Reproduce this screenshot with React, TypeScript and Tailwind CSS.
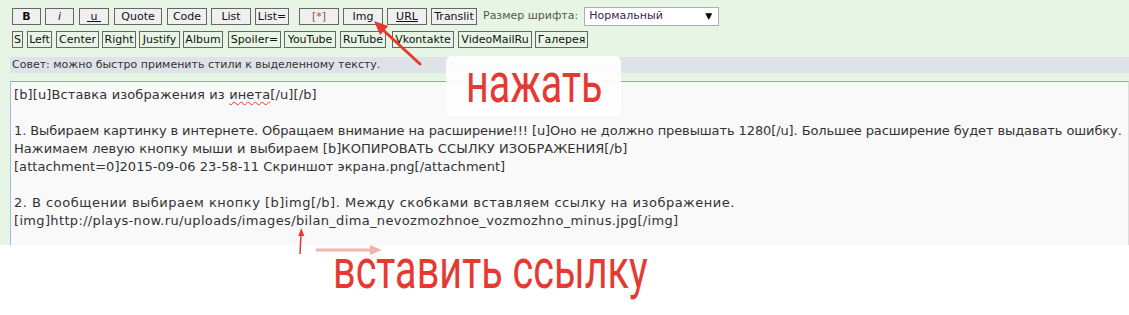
import React from "react";

const row1 = [
  { label: "B", cls: "ml-[2px] w-[29px] font-bold" },
  { label: "i", cls: "ml-[4px] w-[29px] italic" },
  { label: " u ", cls: "ml-[5px] w-[30px] underline whitespace-pre" },
  { label: "Quote", cls: "ml-[5px] w-[48px]" },
  { label: "Code", cls: "ml-[5px] w-[40px]" },
  { label: "List", cls: "ml-[4px] w-[40px]" },
  { label: "List=", cls: "ml-[4px] w-[34px]" },
  { label: "[*]", cls: "ml-[10px] w-[40px] text-[#a0522d]" },
  { label: "Img", cls: "ml-[4px] w-[40px]" },
  { label: "URL", cls: "ml-[4px] w-[40px] underline" },
  { label: "Translit", cls: "ml-[4px] w-[46px]" },
];

const row2 = [
  { label: "S", cls: "w-[11px]" },
  { label: "Left", cls: "ml-[4px] w-[25px]" },
  { label: "Center", cls: "ml-[4px] w-[43px]" },
  { label: "Right", cls: "ml-[3px] w-[34px]" },
  { label: "Justify", cls: "ml-[3px] w-[41px]" },
  { label: "Album", cls: "ml-[3px] w-[40px]" },
  { label: "Spoiler=", cls: "ml-[5px] w-[53px]" },
  { label: "YouTube", cls: "ml-[3px] w-[52px]" },
  { label: "RuTube", cls: "ml-[4px] w-[46px]" },
  { label: "Vkontakte", cls: "ml-[6px] w-[62px]" },
  { label: "VideoMailRu", cls: "ml-[4px] w-[74px]" },
  { label: "Галерея", cls: "ml-[3px] w-[53px]" },
];

export default function App() {
  return (
    <div className="relative w-[1129px] h-[315px] bg-white overflow-hidden font-['DejaVu_Sans',Verdana,sans-serif]">
      <div className="bg-[#e7f6e4] pl-[10px] pt-[8px]">
        <div className="flex items-center h-[17px] text-[11px] text-[#111]">
          {row1.map((b) => (
            <div
              key={b.label}
              className={`h-[17px] shrink-0 flex items-center justify-center border border-[#666] bg-[#f0f0f0] leading-none ${b.cls}`}
            >
              {b.label}
            </div>
          ))}
          <span className="ml-[6px] text-[#555]">Размер шрифта:</span>
          <div className="ml-[6px] w-[135px] h-[19px] bg-white border border-[#a9b0b6] flex items-center justify-between pl-[4px] pr-[6px] text-[#3a2456]">
            <span>Нормальный</span>
            <span className="text-[9px] text-black">▼</span>
          </div>
        </div>
        <div className="flex items-center ml-[2px] mt-[6px] h-[17px] text-[11px] text-[#111]">
          {row2.map((b) => (
            <div
              key={b.label}
              className={`h-[17px] shrink-0 flex items-center justify-center border border-[#666] leading-none whitespace-nowrap ${b.cls}`}
            >
              {b.label}
            </div>
          ))}
        </div>
        <div className="mt-[9px] h-[16px] bg-[#dee3e7] flex items-center pl-[2px] text-[11px] text-[#333]">
          Совет: можно быстро применить стили к выделенному тексту.
        </div>
        <div className="mt-[8px] h-[164px] bg-[#f9f9f9] border-t border-l border-r border-t-[#7ea8e3] border-l-[#9bbce8] border-r-[#dddddd] pl-[3px] pt-[4px] text-[13px] leading-[18px] text-[#333] whitespace-pre">
          <div className="tracking-[0.12px]">
            [b][u]Вставка изображения из{" "}
            <span className="underline decoration-wavy decoration-[#e33] decoration-1 underline-offset-2">инета</span>
            [/u][/b]
          </div>
          <div>&nbsp;</div>
          <div className="tracking-[-0.1px]">1. Выбираем картинку в интернете. Обращаем внимание на расширение!!! [u]Оно не должно превышать 1280[/u]. Большее расширение будет выдавать ошибку.</div>
          <div className="tracking-[0.06px]">Нажимаем левую кнопку мыши и выбираем [b]КОПИРОВАТЬ ССЫЛКУ ИЗОБРАЖЕНИЯ[/b]</div>
          <div className="tracking-[0.05px]">[attachment=0]2015-09-06 23-58-11 Скриншот экрана.png[/attachment]</div>
          <div>&nbsp;</div>
          <div className="tracking-[0.5px]">2. В сообщении выбираем кнопку [b]img[/b]. Между скобками вставляем ссылку на изображение.</div>
          <div className="tracking-[0.34px]">[img]http://plays-now.ru/uploads/images/bilan_dima_nevozmozhnoe_vozmozhno_minus.jpg[/img]</div>
        </div>
      </div>

      {/* annotations */}
      <div className="absolute left-[446px] top-[56px] w-[175px] h-[60px] rounded-md bg-white/90">
        <div className="ml-[20px] origin-left scale-x-[0.72] text-[55px] leading-none font-['Roboto',sans-serif] text-[#e53a32] whitespace-nowrap">
          нажать
        </div>
      </div>
      <div className="absolute left-[333px] top-[242px] origin-left scale-x-[0.72] text-[55px] leading-none font-['Roboto',sans-serif] text-[#e53a32] whitespace-nowrap">
        вставить ссылку
      </div>
      <svg className="absolute left-0 top-0" width="1129" height="315" viewBox="0 0 1129 315">
        <line x1="420" y1="64" x2="382" y2="29" stroke="#e53a32" strokeWidth="3" strokeLinecap="round" />
        <polygon points="374,21 388.3,26.1 380.1,34.9" fill="#e53a32" />
        <line x1="300" y1="254" x2="301" y2="234" stroke="#e53a32" strokeWidth="1.5" />
        <polygon points="301.3,228 298.3,236 304.3,236" fill="#e53a32" />
        <line x1="316" y1="250" x2="372" y2="250" stroke="#f4b2ae" strokeWidth="3" />
        <polygon points="382,250 370,245 370,255" fill="#f4b2ae" />
      </svg>
    </div>
  );
}
